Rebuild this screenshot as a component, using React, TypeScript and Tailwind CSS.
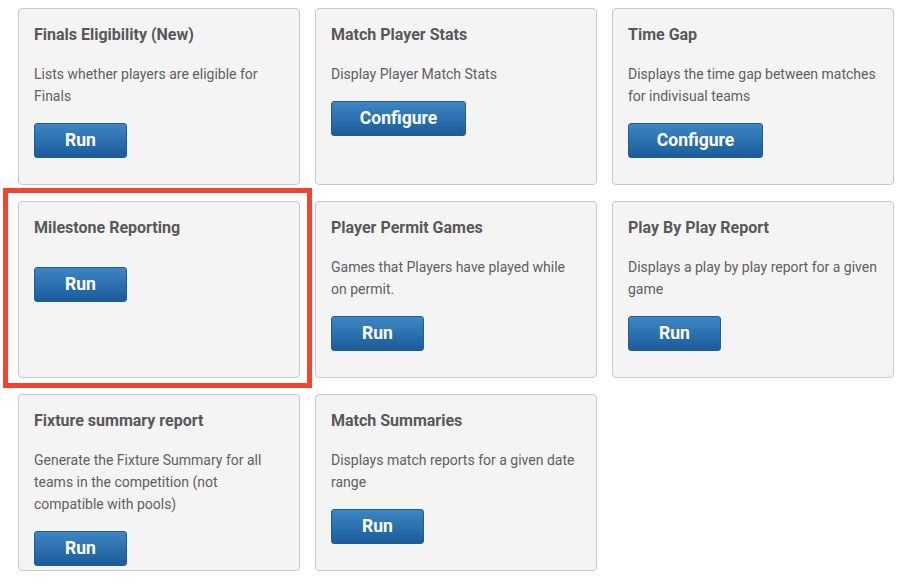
import React from "react";

type Card = { title: string; desc?: string[]; btn: "Run" | "Configure" };

const cards: Card[] = [
  { title: "Finals Eligibility (New)", desc: ["Lists whether players are eligible for", "Finals"], btn: "Run" },
  { title: "Match Player Stats", desc: ["Display Player Match Stats"], btn: "Configure" },
  { title: "Time Gap", desc: ["Displays the time gap between matches", "for indivisual teams"], btn: "Configure" },
  { title: "Milestone Reporting", btn: "Run" },
  { title: "Player Permit Games", desc: ["Games that Players have played while", "on permit."], btn: "Run" },
  { title: "Play By Play Report", desc: ["Displays a play by play report for a given", "game"], btn: "Run" },
  {
    title: "Fixture summary report",
    desc: ["Generate the Fixture Summary for all", "teams in the competition (not", "compatible with pools)"],
    btn: "Run",
  },
  { title: "Match Summaries", desc: ["Displays match reports for a given date", "range"], btn: "Run" },
];

export default function App() {
  return (
    <div
      className="relative w-[904px] h-[588px] bg-white overflow-hidden"
      style={{ fontFamily: "Roboto, 'Noto Sans', sans-serif" }}
    >
      <div className="grid grid-cols-[282px_282px_282px] auto-rows-[177px] gap-x-[15px] gap-y-[16px] pl-[18px] pt-[8px]">
        {cards.map((c) => (
          <div
            key={c.title}
            className="flex flex-col items-start border border-[#c9c9c9] rounded-[4px] bg-[#f4f4f4] pl-[15px] pr-[8px] pt-[16px]"
          >
            <div className="text-[16px] leading-[20px] font-bold text-[#58585a]">{c.title}</div>
            {c.desc && (
              <p className="mt-[18px] text-[14px] leading-[22px] text-[#5f5f5f]">
                {c.desc.map((l) => (
                  <span key={l} className="block whitespace-nowrap">
                    {l}
                  </span>
                ))}
              </p>
            )}
            <button
              className={`${c.desc ? "mt-[16px]" : "mt-[29px]"} ${
                c.btn === "Run" ? "w-[93px]" : "w-[135px]"
              } h-[35px] rounded-[3px] border border-[#1d5e9a] bg-gradient-to-b from-[#3d86c2] to-[#1b5c9b] text-white text-[17.5px] font-bold leading-none`}
            >
              {c.btn}
            </button>
          </div>
        ))}
      </div>
      <div className="absolute left-[3px] top-[188px] w-[309px] h-[200px] border-[5px] border-[#f4432f] pointer-events-none" />
    </div>
  );
}
